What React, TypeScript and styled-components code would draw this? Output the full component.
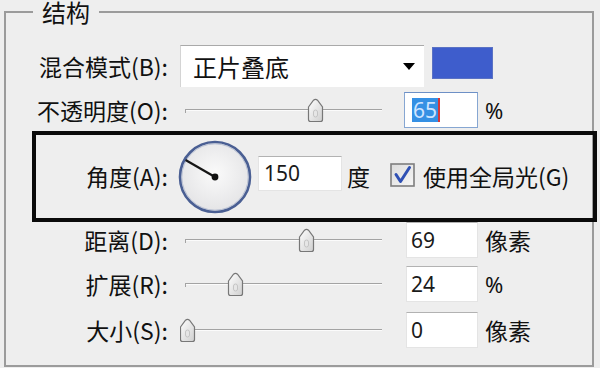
import React from "react";
import styled, { createGlobalStyle } from "styled-components";

const GlobalStyle = createGlobalStyle`
  html, body { margin: 0; padding: 0; background: #eeeeee; }
  body {
    font-family: "Noto Sans CJK SC", "Noto Sans", sans-serif;
    color: #111;
    width: 600px;
    height: 368px;
    overflow: hidden;
  }
`;

const Group = styled.fieldset`
  box-sizing: border-box;
  margin: 0 0 0 4px;
  padding: 0;
  width: 590px;
  height: 367px;
  border: 2px solid #9b9b9b;
  min-width: 0;
`;

const Title = styled.legend`
  margin-left: 27px;
  padding: 0 9px;
  font-size: 24px;
  line-height: 24px;
`;

const Row = styled.div<{ $top: number; $h?: number }>`
  display: flex;
  align-items: center;
  height: ${(p) => p.$h ?? 36}px;
  margin-top: ${(p) => p.$top}px;
`;

const Label = styled.div<{ $w?: number }>`
  flex-shrink: 0;
  width: ${(p) => p.$w ?? 162}px;
  text-align: right;
  font-size: 23px;
  line-height: 1;
  white-space: nowrap;
`;

const Highlight = styled.div`
  box-sizing: border-box;
  display: flex;
  align-items: center;
  flex-shrink: 0;
  margin: 3px 0 0 26px;
  width: 565px;
  height: 91px;
  border: 4px solid #0a0a0a;
`;

const Select = styled.div`
  box-sizing: border-box;
  display: flex;
  align-items: center;
  justify-content: space-between;
  flex-shrink: 0;
  width: 244px;
  height: 42px;
  margin-left: 12px;
  padding: 0 9px 0 12px;
  background: #ffffff;
  border-top: 1px solid #a9a9a9;
  border-left: 1px solid #d4d4d4;
  font-size: 24px;
  line-height: 1;
`;

const Arrow = styled.span`
  width: 0;
  height: 0;
  border-left: 6.5px solid transparent;
  border-right: 6.5px solid transparent;
  border-top: 7px solid #000;
`;

const Swatch = styled.div`
  flex-shrink: 0;
  align-self: flex-start;
  width: 61px;
  height: 32px;
  margin: 2px 0 0 8px;
  box-sizing: border-box;
  background: #3e5dcc;
  border: 1px solid #5a72c4;
`;

const SliderSvg = styled.svg`
  flex-shrink: 0;
  margin-left: 12px;
  display: block;
`;

const NumBox = styled.div<{ $focus?: boolean }>`
  box-sizing: border-box;
  display: flex;
  align-items: center;
  flex-shrink: 0;
  width: ${(p) => (p.$focus ? 74 : 72)}px;
  height: 36px;
  margin-left: ${(p) => (p.$focus ? 12 : 14)}px;
  padding-left: ${(p) => (p.$focus ? 7 : 4)}px;
  background: #ffffff;
  border: 1px solid ${(p) => (p.$focus ? "#86a6d2" : "#e4e4e4")};
  border-top-color: ${(p) => (p.$focus ? "#6d90c6" : "#b2b2b2")};
  font-family: "Noto Sans", sans-serif;
  font-size: 21px;
  line-height: 1;
  color: #1a1a1a;
`;

const AngleBox = styled(NumBox)`
  width: 84px;
  height: 35px;
  margin-left: 6px;
  padding-left: 5px;
  margin-top: -6px;
`;

const Selected = styled.span`
  display: inline-flex;
  align-items: center;
  height: 24px;
  padding: 0 1px;
  background: #3590e4;
  color: #cfe4ff;
  border-right: 2px solid #d6383a;
`;

const Unit = styled.div<{ $small?: boolean }>`
  flex-shrink: 0;
  margin-left: 7px;
  font-size: ${(p) => (p.$small ? 22 : 23)}px;
  line-height: 1;
  font-family: ${(p) => (p.$small ? '"Noto Sans", sans-serif' : '"Noto Sans CJK SC", sans-serif')};
`;

const Dial = styled.svg`
  flex-shrink: 0;
  margin-left: 10px;
  display: block;
`;

const DegUnit = styled.div`
  flex-shrink: 0;
  margin-left: 5px;
  font-size: 23px;
  line-height: 1;
`;

const Check = styled.svg`
  flex-shrink: 0;
  margin-left: 20px;
  margin-top: -4px;
  display: block;
`;

const CheckText = styled.div`
  flex-shrink: 0;
  margin-left: 8px;
  font-size: 23px;
  line-height: 1;
  white-space: nowrap;
`;

function Slider({ thumb }: { thumb: number }) {
  return (
    <SliderSvg width={212} height={36} viewBox="0 0 212 36">
      <defs>
        <linearGradient id={`tg${thumb}`} x1="0" y1="0" x2="1" y2="1">
          <stop offset="0" stopColor="#ffffff" />
          <stop offset="1" stopColor="#cfcfcf" />
        </linearGradient>
      </defs>
      <line x1={5} y1={17.5} x2={202} y2={17.5} stroke="#a3a3a3" strokeWidth={1} />
      <line x1={5} y1={18.5} x2={202} y2={18.5} stroke="#fbfbfb" strokeWidth={1} />
      <line x1={5.5} y1={17} x2={5.5} y2={21} stroke="#a3a3a3" strokeWidth={1} />
      <g transform={`translate(${thumb} 6)`}>
        <path
          d="M1.5 9 L6.5 2.2 Q8.5 0.5 10.5 2.2 L15.5 9 L15.5 21.5 Q15.5 23.5 13.5 23.5 L3.5 23.5 Q1.5 23.5 1.5 21.5 Z"
          fill={`url(#tg${thumb})`}
          stroke="#777"
          strokeWidth={1.2}
        />
        <rect x={6.5} y={12} width={4} height={7} rx={2} fill="#e6e6e6" stroke="#bdbdbd" strokeWidth={0.8} />
      </g>
    </SliderSvg>
  );
}

const sliders = [
  { label: "距离(D):", thumb: 118, value: "69", unit: "像素", top: 0 },
  { label: "扩展(R):", thumb: 47, value: "24", unit: "%", top: 8 },
  { label: "大小(S):", thumb: -1, value: "0", unit: "像素", top: 10 },
];

export default function App() {
  const ang = (150 * Math.PI) / 180;
  const ex = 37 + Math.cos(ang) * 34;
  const ey = 37 - Math.sin(ang) * 34;
  return (
    <>
      <GlobalStyle />
      <Group>
        <Title>结构</Title>
        <Row $top={21} $h={42}>
          <Label>混合模式(B):</Label>
          <Select>
            <span>正片叠底</span>
            <Arrow />
          </Select>
          <Swatch />
        </Row>
        <Row $top={5}>
          <Label>不透明度(O):</Label>
          <Slider thumb={127} />
          <NumBox $focus>
            <Selected>65</Selected>
          </NumBox>
          <Unit $small>%</Unit>
        </Row>
        <Highlight>
          <Label $w={132}>角度(A):</Label>
          <Dial width={74} height={74} viewBox="0 0 74 74">
            <defs>
              <radialGradient id="dialFill" cx="0.5" cy="0.45" r="0.6">
                <stop offset="0" stopColor="#fafafa" />
                <stop offset="1" stopColor="#e2e2e4" />
              </radialGradient>
            </defs>
            <circle cx={37} cy={37} r={35} fill="url(#dialFill)" stroke="#4a5f93" strokeWidth={2.6} />
            <circle cx={37} cy={37} r={33.2} fill="none" stroke="#aab4cc" strokeWidth={0.8} />
            <line x1={37} y1={37} x2={ex} y2={ey} stroke="#151515" strokeWidth={2.2} />
            <circle cx={37} cy={37} r={3.4} fill="#111" />
          </Dial>
          <AngleBox>150</AngleBox>
          <DegUnit>度</DegUnit>
          <Check width={25} height={24} viewBox="0 0 25 24">
            <defs>
              <linearGradient id="cbFill" x1="0" y1="0" x2="1" y2="1">
                <stop offset="0" stopColor="#dcdcdc" />
                <stop offset="1" stopColor="#f6f6f6" />
              </linearGradient>
            </defs>
            <rect x={1} y={1} width={23} height={22} fill="url(#cbFill)" stroke="#7e7e7e" strokeWidth={1.6} />
            <path d="M6 11.5 L10.5 18.5 L19.5 4.5" fill="none" stroke="#2f50b4" strokeWidth={3} strokeLinecap="round" strokeLinejoin="round" />
          </Check>
          <CheckText>使用全局光(G)</CheckText>
        </Highlight>
        {sliders.map((s) => (
          <Row key={s.label} $top={s.top}>
            <Label>{s.label}</Label>
            <Slider thumb={s.thumb} />
            <NumBox>{s.value}</NumBox>
            <Unit $small={s.unit === "%"}>{s.unit}</Unit>
          </Row>
        ))}
      </Group>
    </>
  );
}
